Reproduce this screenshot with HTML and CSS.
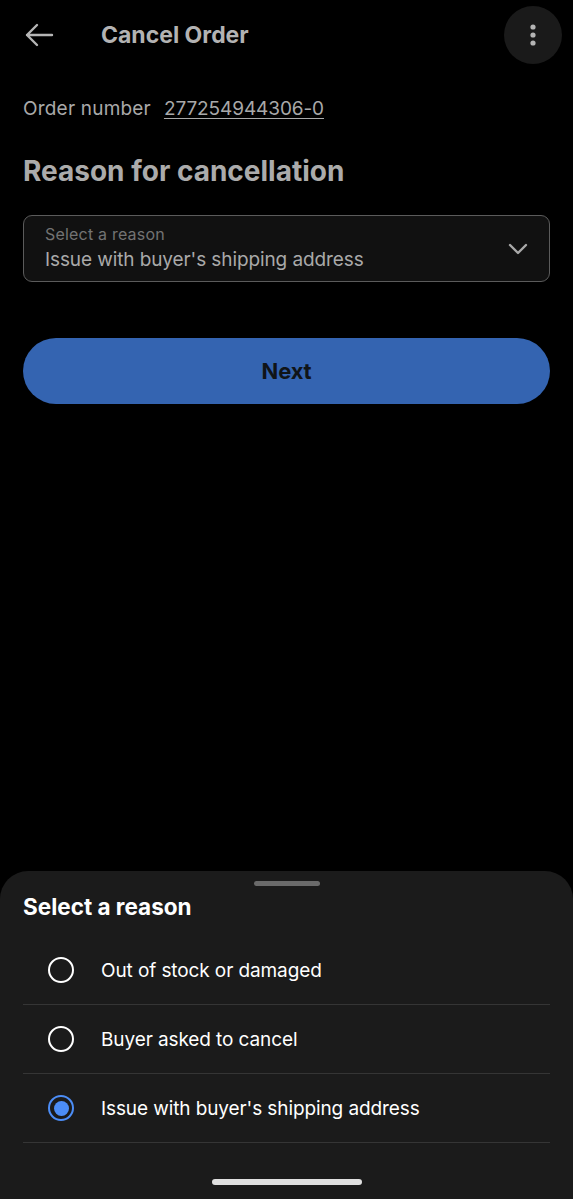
FILE: index.html
```html
<!DOCTYPE html>
<html lang="en">
<head>
    <meta charset="UTF-8">
    <meta name="viewport" content="width=device-width, initial-scale=1.0">
    <title>Cancel Order</title>
    <link rel="stylesheet" href="styles.css">
</head>
<body>
    <div class="screen">
        <!-- App bar -->
        <header class="app-bar">
            <button class="icon-btn back-btn" aria-label="Back">
                <svg width="32" height="32" viewBox="0 0 32 32" fill="none" stroke="currentColor" stroke-width="2.4" stroke-linecap="round" stroke-linejoin="round">
                    <path d="M29 16H4M14 6L4 16l10 10"/>
                </svg>
            </button>
            <h1 class="app-title">Cancel Order</h1>
            <button class="icon-btn more-btn" aria-label="More">
                <svg width="8" height="24" viewBox="0 0 8 24" fill="currentColor">
                    <circle cx="4" cy="4" r="2.6"/>
                    <circle cx="4" cy="12" r="2.6"/>
                    <circle cx="4" cy="20" r="2.6"/>
                </svg>
            </button>
        </header>

        <main class="content">
            <div class="order-line">
                <span>Order number</span>
                <a href="#" class="order-link">277254944306-0</a>
            </div>

            <h2 class="section-title">Reason for cancellation</h2>

            <div class="select-box">
                <div class="select-text">
                    <div class="select-label">Select a reason</div>
                    <div class="select-value">Issue with buyer's shipping address</div>
                </div>
                <svg class="chevron" width="22" height="22" viewBox="0 0 22 22" fill="none" stroke="currentColor" stroke-width="2.4" stroke-linecap="round" stroke-linejoin="round">
                    <path d="M3 7l8 8 8-8"/>
                </svg>
            </div>

            <button class="primary-btn">Next</button>
        </main>

        <!-- Bottom sheet -->
        <section class="sheet">
            <div class="sheet-handle"></div>
            <h3 class="sheet-title">Select a reason</h3>
            <ul class="reason-list">
                <li class="reason-row">
                    <span class="radio"></span>
                    <span>Out of stock or damaged</span>
                </li>
                <li class="reason-row">
                    <span class="radio"></span>
                    <span>Buyer asked to cancel</span>
                </li>
                <li class="reason-row">
                    <span class="radio checked"></span>
                    <span>Issue with buyer's shipping address</span>
                </li>
            </ul>
            <div class="home-bar"></div>
        </section>
    </div>
</body>
</html>
```

FILE: styles.css
```css
body {
    margin: 0;
    background-color: #000000;
    font-family: Inter, "Noto Sans", Arial, sans-serif;
    color: #ffffff;
}

.screen {
    width: 573px;
    height: 1199px;
    display: flex;
    flex-direction: column;
    overflow: hidden;
}

.app-bar {
    height: 71px;
    display: flex;
    align-items: center;
    padding: 0 11px 0 22px;
    box-sizing: border-box;
}

.icon-btn {
    border: none;
    background: none;
    padding: 0;
    color: #b5b5b5;
    display: flex;
    align-items: center;
    justify-content: center;
    cursor: pointer;
}

.back-btn {
    width: 34px;
    height: 34px;
    margin-top: -2px;
}

.app-title {
    flex: 1;
    margin: -1px 0 0 45px;
    font-size: 23px;
    font-weight: 700;
    color: #b3b3b3;
}

.more-btn {
    width: 58px;
    height: 58px;
    border-radius: 50%;
    background-color: #1a1a1a;
    margin-top: -1px;
}

.content {
    padding: 0 23px;
    flex: 1;
}

.order-line {
    margin-top: 26px;
    font-size: 19px;
    color: #a9a9a9;
    display: flex;
    gap: 13px;
    letter-spacing: 0.2px;
}

.order-link {
    color: #a9a9a9;
    letter-spacing: -0.1px;
    text-decoration: underline;
    text-underline-offset: 3px;
}

.section-title {
    margin: 34px 0 0;
    font-size: 28px;
    font-weight: 700;
    color: #ababab;
}

.select-box {
    margin-top: 27px;
    height: 67px;
    box-sizing: border-box;
    border: 1.5px solid #5b5b5b;
    border-radius: 9px;
    background-color: #111111;
    display: flex;
    align-items: center;
    padding: 0 20px 0 21px;
}

.select-text {
    flex: 1;
}

.select-label {
    font-size: 16px;
    line-height: 18px;
    color: #737373;
    letter-spacing: 0.2px;
}

.select-value {
    font-size: 19px;
    line-height: 24px;
    color: #a9a9a9;
    margin-top: 5px;
    letter-spacing: -0.1px;
}

.chevron {
    color: #a9a9a9;
}

.primary-btn {
    display: block;
    width: 100%;
    height: 66px;
    margin-top: 56px;
    border: none;
    border-radius: 33px;
    background-color: #3464b1;
    color: #101418;
    font-family: inherit;
    font-size: 22px;
    font-weight: 700;
    letter-spacing: -0.2px;
    cursor: pointer;
}

.sheet {
    background-color: #1b1b1b;
    border-radius: 28px 28px 0 0;
    height: 328px;
    box-sizing: border-box;
    padding: 10px 23px 0;
    display: flex;
    flex-direction: column;
}

.sheet-handle {
    width: 66px;
    height: 5px;
    border-radius: 3px;
    background-color: #6a6a6a;
    align-self: center;
}

.sheet-title {
    margin: 7px 0 0;
    font-size: 22.5px;
    font-weight: 700;
}

.reason-list {
    list-style: none;
    margin: 16px 0 0;
    padding: 0;
}

.reason-row {
    height: 69px;
    display: flex;
    align-items: center;
    gap: 27px;
    padding-left: 25px;
    font-size: 19px;
    letter-spacing: -0.1px;
    border-bottom: 1.5px solid #353535;
    box-sizing: border-box;
}

.radio {
    width: 26px;
    height: 26px;
    border-radius: 50%;
    border: 2.5px solid #ffffff;
    box-sizing: border-box;
    position: relative;
}

.radio.checked {
    border-color: #4c8df6;
}

.radio.checked::after {
    content: "";
    position: absolute;
    inset: 3.5px;
    border-radius: 50%;
    background-color: #4c8df6;
}

.home-bar {
    width: 150px;
    height: 6px;
    border-radius: 3px;
    background-color: #e0e0e0;
    align-self: center;
    margin-top: 36px;
}
```
